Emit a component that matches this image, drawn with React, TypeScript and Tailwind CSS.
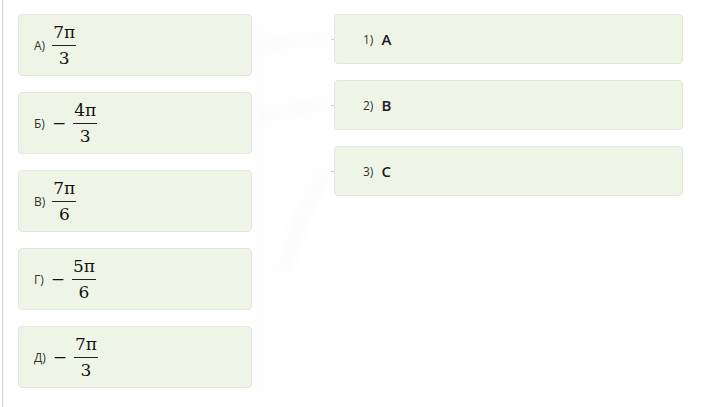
import React from 'react';

type Item = { label: string; minus: boolean; num: string; den: string };

const left: Item[] = [
  { label: 'А)', minus: false, num: '7π', den: '3' },
  { label: 'Б)', minus: true, num: '4π', den: '3' },
  { label: 'В)', minus: false, num: '7π', den: '6' },
  { label: 'Г)', minus: true, num: '5π', den: '6' },
  { label: 'Д)', minus: true, num: '7π', den: '3' },
];

const right = [
  { n: '1)', v: 'A' },
  { n: '2)', v: 'B' },
  { n: '3)', v: 'C' },
];

const sans = "font-['Open_Sans','Liberation_Sans',sans-serif]";
const serif = "font-['DejaVu_Serif','Liberation_Serif',serif]";

function Fraction({ num, den }: { num: string; den: string }) {
  return (
    <span className={`inline-flex flex-col items-center ${serif} text-[17px] leading-none text-[#111]`}>
      <span className="px-[1px] pb-[4px]">{num}</span>
      <span className="h-[1px] w-full bg-[#222]" />
      <span className="pt-[4px]">{den}</span>
    </span>
  );
}

export default function App() {
  return (
    <div className="relative w-[706px] h-[407px] bg-white overflow-hidden">
      {/* faint drag ghost between columns */}
      <svg className="absolute left-0 top-0 pointer-events-none" width="706" height="407">
        <defs>
          <filter id="blur" x="-50%" y="-50%" width="200%" height="200%">
            <feGaussianBlur stdDeviation="7" />
          </filter>
        </defs>
        <g filter="url(#blur)" stroke="#000" strokeOpacity="0.018" fill="none" strokeWidth="12">
          <path d="M258 48 C 285 42, 305 38, 330 38" />
          <path d="M258 118 C 285 110, 305 106, 330 104" />
          <path d="M330 168 C 310 190, 295 230, 282 275" />
          <path d="M258 20 L 262 400" strokeOpacity="0.012" />
        </g>
        <g stroke="#cfcfcf" strokeWidth="1">
          <line x1="331" y1="39.5" x2="334" y2="39.5" />
          <line x1="331" y1="105.5" x2="334" y2="105.5" />
          <line x1="331" y1="171.5" x2="334" y2="171.5" />
        </g>
      </svg>

      <div className="relative ml-[2px] h-full border-l border-[#cfcfcf] pl-[15px] pt-[14px] flex gap-[82px]">
        <div className="w-[234px] flex flex-col gap-[16px]">
          {left.map((it) => (
            <div
              key={it.label}
              className="h-[62px] rounded-[4px] border border-[#e3e6df] bg-[#eef5e7] flex items-center pl-[15px]"
            >
              <span className={`${sans} text-[12px] text-[#333] mr-[7px] mt-[2px]`}>{it.label}</span>
              {it.minus && (
                <span className={`${serif} text-[17px] text-[#111] mr-[7px] mt-[1px]`}>−</span>
              )}
              <Fraction num={it.num} den={it.den} />
            </div>
          ))}
        </div>

        <div className="w-[349px] flex flex-col gap-[16px]">
          {right.map((r) => (
            <div
              key={r.n}
              className="h-[50px] rounded-[4px] border border-[#e3e6df] bg-[#eef5e7] flex items-center pl-[28px]"
            >
              <span className={`${sans} text-[12px] text-[#333] mr-[8px] mt-[1px]`}>{r.n}</span>
              <span className={`${sans} text-[15px] font-semibold text-[#1a1a1a]`}>{r.v}</span>
            </div>
          ))}
        </div>
      </div>
    </div>
  );
}
